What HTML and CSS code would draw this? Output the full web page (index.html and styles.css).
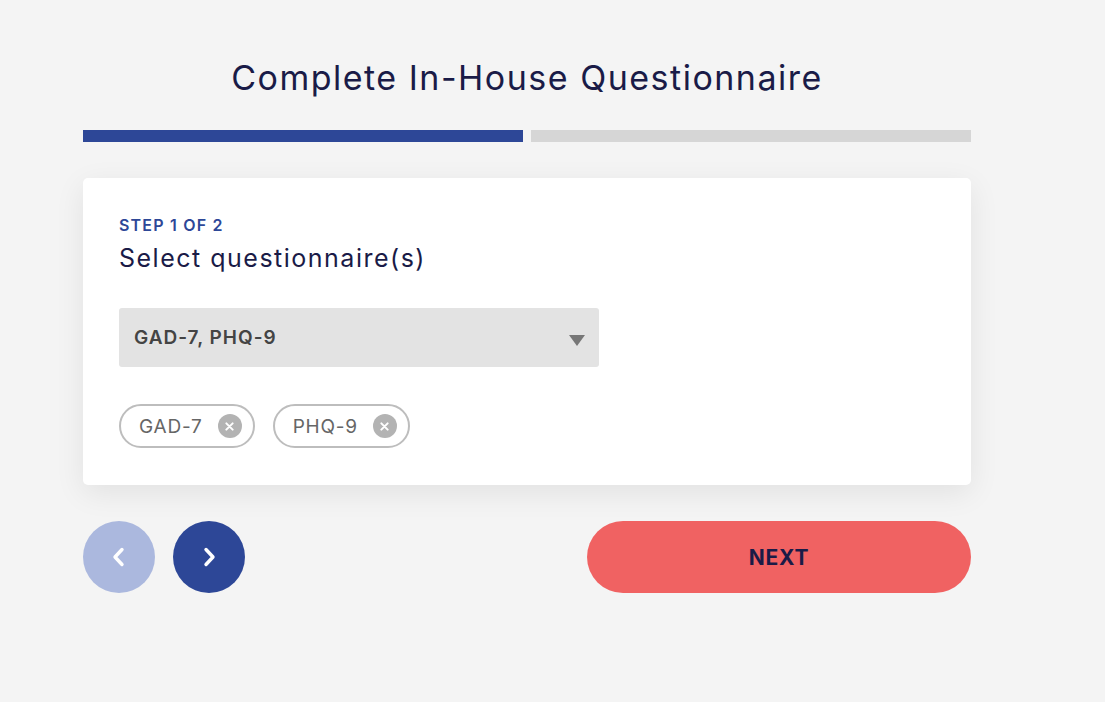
FILE: index.html
```html
<!DOCTYPE html>
<html lang="en">
<head>
  <meta charset="UTF-8">
  <meta name="viewport" content="width=device-width, initial-scale=1.0">
  <title>Complete In-House Questionnaire</title>
  <link rel="stylesheet" href="styles.css">
</head>
<body>
  <div class="wizard">
    <h1 class="wizard-title">Complete In-House Questionnaire</h1>

    <!-- Progress -->
    <div class="progress">
      <div class="progress-step done"></div>
      <div class="progress-step"></div>
    </div>

    <!-- Step card -->
    <div class="card">
      <p class="step-label">STEP 1 OF 2</p>
      <h2 class="step-title">Select questionnaire(s)</h2>

      <div class="select">
        <span class="select-value">GAD-7, PHQ-9</span>
        <span class="select-caret"></span>
      </div>

      <div class="chips">
        <div class="chip">
          <span>GAD-7</span>
          <span class="chip-remove">
            <svg viewBox="0 0 10 10" width="9" height="9"><path d="M1.5 1.5 L8.5 8.5 M8.5 1.5 L1.5 8.5" stroke="#fff" stroke-width="2.2" stroke-linecap="round"/></svg>
          </span>
        </div>
        <div class="chip">
          <span>PHQ-9</span>
          <span class="chip-remove">
            <svg viewBox="0 0 10 10" width="9" height="9"><path d="M1.5 1.5 L8.5 8.5 M8.5 1.5 L1.5 8.5" stroke="#fff" stroke-width="2.2" stroke-linecap="round"/></svg>
          </span>
        </div>
      </div>
    </div>

    <!-- Navigation -->
    <div class="nav">
      <div class="nav-arrows">
        <button class="arrow arrow-disabled">
          <svg viewBox="0 0 24 24" width="24" height="24"><path d="M15 4.5 L8 12 L15 19.5" fill="none" stroke="#fff" stroke-width="3.4" stroke-linecap="round" stroke-linejoin="round"/></svg>
        </button>
        <button class="arrow">
          <svg viewBox="0 0 24 24" width="24" height="24"><path d="M9 4.5 L16 12 L9 19.5" fill="none" stroke="#fff" stroke-width="3.4" stroke-linecap="round" stroke-linejoin="round"/></svg>
        </button>
      </div>
      <button class="next-button">NEXT</button>
    </div>
  </div>
</body>
</html>
```

FILE: styles.css
```css
/* Global Styles */
* {
  margin: 0;
  padding: 0;
  box-sizing: border-box;
  font-family: Inter, 'Liberation Sans', Arial, sans-serif;
}

body {
  background-color: #f4f4f4;
  padding: 56px 0 0 83px;
}

.wizard {
  width: 888px;
}

.wizard-title {
  text-align: center;
  font-size: 34px;
  font-weight: 400;
  letter-spacing: 1.5px;
  color: #1a1b47;
  line-height: 44px;
}

/* Progress */
.progress {
  display: flex;
  gap: 8px;
  margin-top: 30px;
}

.progress-step {
  flex: 1;
  height: 12px;
  background-color: #d6d6d6;
}

.progress-step.done {
  background-color: #2d4797;
}

/* Card */
.card {
  margin-top: 36px;
  background-color: #ffffff;
  border-radius: 5px;
  padding: 38px 36px 37px;
  box-shadow: 0 8px 30px rgba(0, 0, 0, 0.08);
}

.step-label {
  font-size: 16px;
  font-weight: 600;
  letter-spacing: 1.2px;
  color: #2d4797;
  line-height: 18px;
}

.step-title {
  margin-top: 9px;
  font-size: 25px;
  font-weight: 400;
  letter-spacing: 1.5px;
  color: #1a1b47;
  line-height: 30px;
}

.select {
  margin-top: 35px;
  width: 480px;
  height: 59px;
  background-color: #e3e3e3;
  border-radius: 3px;
  display: flex;
  align-items: center;
  justify-content: space-between;
  padding: 0 14px 0 15px;
}

.select-value {
  font-size: 19px;
  font-weight: 600;
  letter-spacing: 1px;
  color: #444444;
}

.select-caret {
  width: 0;
  height: 0;
  border-left: 8px solid transparent;
  border-right: 8px solid transparent;
  border-top: 11px solid #777777;
  margin-top: 6px;
}

/* Chips */
.chips {
  display: flex;
  gap: 18px;
  margin-top: 37px;
}

.chip {
  display: flex;
  align-items: center;
  gap: 15px;
  height: 44px;
  padding: 0 11px 0 18px;
  border: 2px solid #bdbdbd;
  border-radius: 22px;
  font-size: 19px;
  letter-spacing: 0.8px;
  color: #666666;
}

.chip-remove {
  width: 24px;
  height: 24px;
  border-radius: 50%;
  background-color: #b3b3b3;
  display: flex;
  justify-content: center;
  align-items: center;
}

/* Navigation */
.nav {
  display: flex;
  justify-content: space-between;
  align-items: center;
  margin-top: 36px;
}

.nav-arrows {
  display: flex;
  gap: 18px;
}

.arrow {
  width: 72px;
  height: 72px;
  border-radius: 50%;
  border: none;
  background-color: #2d4797;
  display: flex;
  justify-content: center;
  align-items: center;
  cursor: pointer;
}

.arrow-disabled {
  background-color: #abb8de;
  cursor: default;
}

.next-button {
  width: 384px;
  height: 72px;
  border: none;
  border-radius: 36px;
  background-color: #f06262;
  color: #1a1b47;
  font-size: 21px;
  font-weight: 700;
  letter-spacing: 0.8px;
  cursor: pointer;
}
```
